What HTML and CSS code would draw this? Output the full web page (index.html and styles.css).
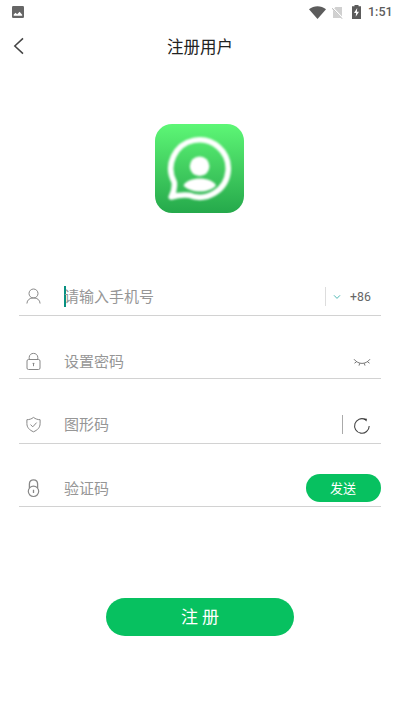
FILE: index.html
```html
<!DOCTYPE html>
<html lang="zh-CN">
<head>
<meta charset="utf-8">
<title>注册用户</title>
<link rel="stylesheet" href="styles.css">
</head>
<body>
<div class="status">
  <svg class="status-photo" width="12" height="12" viewBox="0 0 12 12"><rect width="12" height="12" rx="1.3" fill="#666"/><path d="M1.7 9.8V8.6L3.6 6.7L5.1 8.2L7.6 5.8L10.2 8.7V9.8Z" fill="#fff"/></svg>
  <svg class="status-wifi" width="17" height="13" viewBox="0 0 17 13"><path d="M0 3.2C5-.9 12-.9 17 3.2L8.5 13Z" fill="#5c5c5c"/></svg>
  <svg class="status-sim" width="11" height="13" viewBox="0 0 11 13"><path d="M3.5 1H10V12H1V3.5Z" fill="#d0d0d0"/><path d="M0 1.5L10.5 12.5" stroke="#fff" stroke-width="2"/><path d="M0 2.2L10 12.6" stroke="#aaa" stroke-width="1"/></svg>
  <svg class="status-battery" width="9" height="14" viewBox="0 0 9 14"><path d="M2.5 0H6.5V1.3H9V14H0V1.3H2.5Z" fill="#5c5c5c"/><path d="M5.2 3L2 8H4.1L3.7 11.8L7 6.7H4.9Z" fill="#fff"/></svg>
  <span class="clock">1:51</span>
</div>
<header class="header">
  <svg class="back" width="11" height="18" viewBox="0 0 11 18"><path d="M10 1.4L1.8 9L10 16.6" fill="none" stroke="#444" stroke-width="1.5"/></svg>
  <h1 class="title">注册用户</h1>
</header>
<svg class="logo" width="89" height="89" viewBox="0 0 89 89">
  <defs><linearGradient id="green" x1="0" y1="0" x2="0" y2="1"><stop offset="0" stop-color="#5df776"/><stop offset=".5" stop-color="#42ce60"/><stop offset="1" stop-color="#25a94b"/></linearGradient>
  <filter id="soft" x="-10%" y="-10%" width="120%" height="120%"><feGaussianBlur stdDeviation=".8"/></filter></defs>
  <rect width="89" height="89" rx="17" fill="url(#green)"/>
  <g filter="url(#soft)">
    <path d="M19.2 58A28.7 28.7 0 1 1 34 71.2Q26 70.2 16.2 73Q20.3 65.5 19.2 58Z" fill="none" stroke="#fff" stroke-width="5.6" stroke-linejoin="round"/>
    <circle cx="44.6" cy="42.3" r="9.8" fill="#fff"/>
    <path d="M28.5 61.5C33 52.3 56.5 52.3 61 61.5C54 69.5 36 69.5 28.5 61.5Z" fill="#fff"/>
  </g>
</svg>
<main class="form">
  <div class="row phone">
    <svg class="icon" width="19" height="19" viewBox="0 0 19 19"><circle cx="9.5" cy="6.5" r="4.5"/><path d="M2.9 16.5C3.2 13 5.5 10.9 9.5 10.9S15.8 13 16.1 16.5"/></svg>
    <span class="caret"></span><span class="hint">请输入手机号</span>
    <span class="divider"></span>
    <svg class="chevron" width="8" height="6" viewBox="0 0 8 6"><path d="M1 1.3L4 4.4L7 1.3" fill="none" stroke="#4fb9b5"/></svg>
    <span class="code">+86</span>
  </div>
  <div class="row password">
    <svg class="icon" width="19" height="19" viewBox="0 0 19 19"><rect x="3" y="7.5" width="13" height="10" rx="1.5"/><path d="M5.2 7.5V5.5C5.2 0 13.8 0 13.8 5.5V7.5M9.5 11V14.2M8.6 11.4H10.4"/></svg>
    <span class="hint">设置密码</span>
    <svg class="eye" width="18" height="9" viewBox="0 0 18 9"><path d="M1 1.2C5.5 6.8 12.5 6.8 17 1.2M3.6 3.7L1.5 5.2M6.8 5.2L6 7.6M11.2 5.2L12 7.6M14.4 3.7L16.5 5.2" fill="none" stroke="#777"/></svg>
  </div>
  <div class="row captcha">
    <svg class="icon" width="19" height="19" viewBox="0 0 19 19"><path d="M9.5 2.4C7.5 4 5.2 4.7 2.9 4.7V8.5C2.9 12.5 5.3 15 9.5 16.8C13.7 15 16.1 12.5 16.1 8.5V4.7C13.8 4.7 11.5 4 9.5 2.4ZM6.5 9.6L8.8 11.8L12.6 7.6"/></svg>
    <span class="hint">图形码</span>
    <span class="divider dark"></span>
    <svg class="refresh" width="18" height="18" viewBox="0 0 18 18"><path d="M16.2 9A7.3 7.3 0 1 1 12.2 2.4" fill="none" stroke="#444" stroke-width="1.1"/><path d="M10.3 1.4L13.9 1.7L13.5 4.5Z" fill="#333"/></svg>
  </div>
  <div class="row verify">
    <svg class="icon" width="19" height="19" viewBox="0 0 19 19"><circle cx="9.5" cy="12.3" r="5.2" stroke-width="1.2"/><path d="M5.4 9V5C5.4 -.6 13.6 -.6 13.6 5V9M9.5 10.7V13.9" stroke-width="1.3"/></svg>
    <span class="hint">验证码</span>
    <button class="send">发送</button>
  </div>
</main>
<button class="submit">注 册</button>
</body>
</html>
```
FILE: styles.css
```css
* { box-sizing: border-box; }
body {
  margin: 0;
  height: 711px;
  background: #fff;
  overflow: hidden;
  font-family: Roboto, "Noto Sans CJK SC", sans-serif;
}
svg { display: block; flex: none; }
button { border: 0; color: #fff; background: #07c160; font-family: inherit; }
.status { display: flex; align-items: center; height: 24px; padding: 0 8px 0 12px; }
.status-wifi { margin-left: auto; }
.status-sim { margin-left: 6px; }
.status-battery { margin-left: 9px; }
.clock { width: 24px; margin-left: 7px; padding-bottom: 1px; font-size: 12.5px; font-weight: 500; color: #5c5c5c; white-space: nowrap; }
.header { display: grid; grid-template-columns: 40px 1fr 40px; align-items: center; height: 44px; }
.back { margin-left: 13px; }
.title { margin: 0; padding-top: 3px; font-size: 16.5px; font-weight: 400; line-height: 24px; text-align: center; color: #222; }
.logo { margin: 56px 0 0 155px; }
.form { margin: 65px 19px 0; }
.row { display: flex; align-items: center; padding-left: 5px; border-bottom: 1px solid #d2d2d2; }
.phone { height: 38px; }
.password { height: 34px; margin-top: 29px; }
.captcha { height: 38px; margin-top: 27px; }
.verify { height: 37px; margin-top: 26px; }
.icon { margin-right: 21px; fill: none; stroke: #888; stroke-width: 1; }
.hint { flex: 1; padding-top: 1px; font-size: 15px; line-height: 22px; color: #969696; }
.caret { width: 2px; height: 21px; margin-right: -2px; background: #079080; }
.divider { width: 1px; height: 19px; background: #ddd; }
.dark { background: #aaa; }
.chevron { margin: 0 9px 0 7px; }
.code { width: 31px; font-size: 12.3px; color: #666; }
.eye { margin: 1px 10px 0 0; }
.refresh { margin: 2px 10px 0; }
.send { width: 75px; height: 28px; padding: 0 1px 1px 0; border-radius: 14px; font-size: 13px; }
.submit { display: block; width: 188px; height: 38px; margin: 91px 0 0 106px; padding: 0 0 3px; border-radius: 19px; font-size: 17px; }
```
